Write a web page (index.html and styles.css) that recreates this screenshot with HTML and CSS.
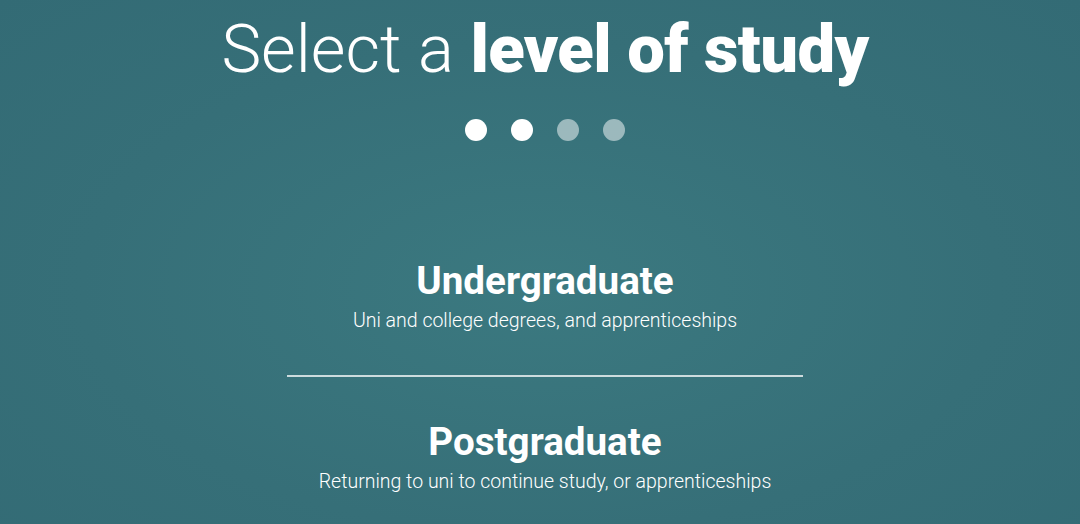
FILE: index.html
```html
<!DOCTYPE html>
<html>
<head>
<meta charset="utf-8">
<link rel="stylesheet" href="styles.css">
</head>
<body>
<main class="page">
  <h1 class="title"><span class="light">Select a</span> <strong class="bold">level of study</strong></h1>
  <div class="dots">
    <span class="dot on"></span>
    <span class="dot on"></span>
    <span class="dot"></span>
    <span class="dot"></span>
  </div>
  <ul class="options">
    <li class="option">
      <h2 class="opt-title">Undergraduate</h2>
      <p class="opt-desc">Uni and college degrees, and apprenticeships</p>
    </li>
    <li class="divider"></li>
    <li class="option">
      <h2 class="opt-title">Postgraduate</h2>
      <p class="opt-desc">Returning to uni to continue study, or apprenticeships</p>
    </li>
  </ul>
</main>
</body>
</html>
```
FILE: styles.css
```css
html, body {
  margin: 0;
  padding: 0;
  height: 100%;
}
body {
  background: radial-gradient(ellipse at 50% 55%, #3b7980 0%, #366f78 60%, #336b75 100%);
  color: #fff;
  font-family: Roboto, "Noto Sans", sans-serif;
  overflow: hidden;
}
.page {
  display: flex;
  flex-direction: column;
  align-items: center;
  padding-left: 10px;
}
.title {
  margin: 8px 0 0;
  font-size: 67px;
  line-height: 82px;
  font-weight: 700;
  white-space: nowrap;
}
.title .light {
  font-weight: 300;
}
.title .bold {
  letter-spacing: -0.6px;
}
.dots {
  display: flex;
  gap: 24px;
  margin-top: 29px;
}
.dot {
  width: 22px;
  height: 22px;
  border-radius: 50%;
  background: rgba(255, 255, 255, 0.5);
}
.dot.on {
  background: #fff;
}
.options {
  list-style: none;
  margin: 118px 0 0;
  padding: 0;
  display: flex;
  flex-direction: column;
  align-items: center;
}
.option {
  text-align: center;
}
.opt-title {
  margin: 0;
  font-size: 38.6px;
  line-height: 44px;
  font-weight: 700;
}
.opt-desc {
  margin: 5px 0 0;
  font-size: 19.5px;
  line-height: 26px;
  font-weight: 300;
}
.divider {
  width: 516px;
  height: 2px;
  background: rgba(255, 255, 255, 0.75);
  margin: 41px 0 43px;
}
```
